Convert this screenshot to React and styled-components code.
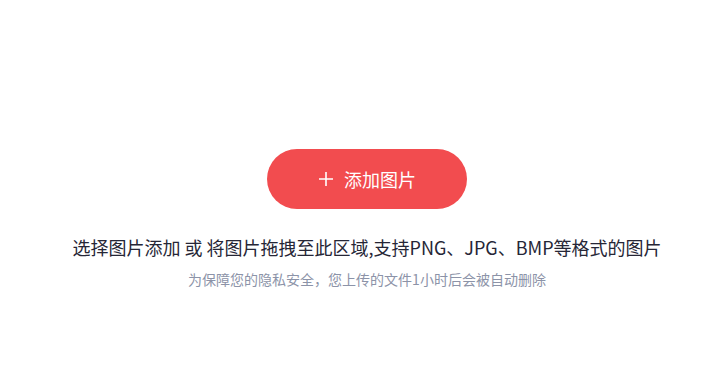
import React from "react";
import styled, { createGlobalStyle } from "styled-components";

const Global = createGlobalStyle`
  html, body { margin: 0; padding: 0; background: #ffffff; }
  body { font-family: "Noto Sans CJK SC", "Noto Sans", sans-serif; }
`;

const Page = styled.div`
  width: 728px;
  height: 382px;
  display: flex;
  flex-direction: column;
  align-items: center;
  padding: 149px 0 0 6px;
  box-sizing: border-box;
`;

const AddButton = styled.button`
  width: 200px;
  height: 60px;
  border: none;
  border-radius: 30px;
  background: #f24c4f;
  color: #ffffff;
  font-family: "Noto Sans CJK SC", sans-serif;
  font-size: 18px;
  display: flex;
  align-items: center;
  justify-content: center;
  gap: 10px;
  padding: 0;
  cursor: pointer;
`;

const PlusIcon = styled.svg`
  width: 16px;
  height: 16px;
  display: block;
`;

const MainText = styled.div`
  margin-top: 25px;
  font-size: 18px;
  line-height: 26px;
  color: #262636;
  font-family: "Noto Sans CJK SC", sans-serif;
  white-space: nowrap;
`;

const SubText = styled.div`
  margin-top: 9px;
  font-size: 14px;
  line-height: 20px;
  color: #8c93a8;
  font-family: "Noto Sans CJK SC", sans-serif;
  white-space: nowrap;
`;

export default function App() {
  return (
    <>
      <Global />
      <Page>
        <AddButton>
          <PlusIcon viewBox="0 0 16 16">
            <path d="M8 1v14M1 8h14" stroke="#ffffff" strokeWidth="1.6" fill="none" />
          </PlusIcon>
          添加图片
        </AddButton>
        <MainText>选择图片添加 或 将图片拖拽至此区域,支持PNG、JPG、BMP等格式的图片</MainText>
        <SubText>为保障您的隐私安全，您上传的文件1小时后会被自动删除</SubText>
      </Page>
    </>
  );
}
